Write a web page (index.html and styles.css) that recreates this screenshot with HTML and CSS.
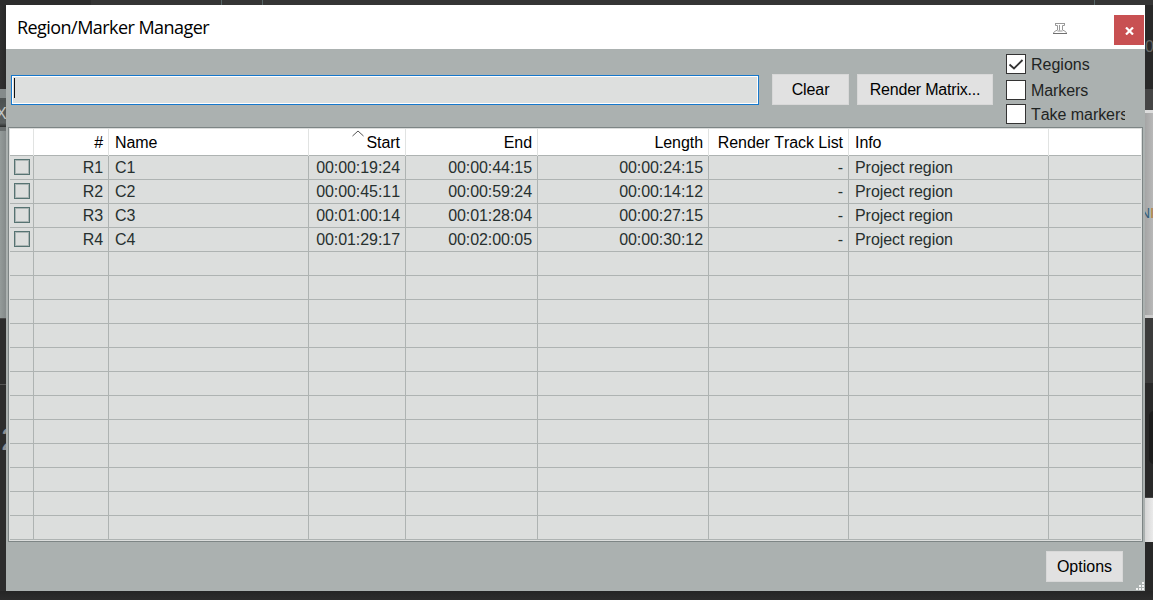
FILE: index.html
```html
<!DOCTYPE html>
<html lang="en">
<head>
<meta charset="utf-8">
<title>Region/Marker Manager</title>
<link rel="stylesheet" href="styles.css">
</head>
<body>
<div class="edge edge-top"><i class="notch"></i><i class="notch"></i><i class="notch notch-far"></i></div>
<div class="edge edge-left">
  <div class="l-dark"></div><div class="l-light"></div><div class="l-seam"></div>
  <div class="l-tab"><span>X</span></div><div class="l-lip"></div><div class="l-panel"></div>
  <div class="l-upper"></div><div class="l-lower"><span>2</span></div>
</div>
<main class="window">
  <header class="titlebar">
    <h1 class="title">Region/Marker Manager</h1>
    <svg class="pin" width="14" height="11" viewBox="0 0 14 11" fill="none" stroke="#999"><path d="M2 .5h10M2.500 1v1.500h2v4.500l-3 1.500-1 1.500M11.500 1v1.500h-2v4.500l3 1.500 1 1.500M6.500 2v5.500M4.500 8h5" /><path d="M0 10.500h14" stroke="#707070"/></svg>
    <button class="close" aria-label="Close"><svg width="9" height="8" viewBox="0 0 9 8"><path d="M1 .5l7 7M8 .5l-7 7" stroke="#fff" stroke-width="2.200"/></svg></button>
  </header>
  <section class="toolbar">
    <div class="search"><span class="caret"></span></div>
    <button class="btn clear">Clear</button>
    <button class="btn matrix">Render Matrix...</button>
    <div class="filters">
      <label class="filter"><span class="check"><svg width="18" height="18" viewBox="0 0 18 18"><path d="M2.500 9.500l4.500 4L15.500 5" fill="none" stroke="#333" stroke-width="1.800"/></svg></span><span>Regions</span></label>
      <label class="filter second"><span class="check"></span><span>Markers</span></label>
      <label class="filter third"><span class="check"></span><span class="clip">Take markers</span></label>
    </div>
  </section>
  <section class="list">
    <div class="row head"><span></span><span class="r">#</span><span>Name</span><span class="r sorted">Start<svg class="sort" width="12" height="7" viewBox="0 0 12 7"><path d="M.5 6l5.500-5 5.500 5" fill="none" stroke="#555"/></svg></span><span class="r">End</span><span class="r">Length</span><span class="r">Render Track List</span><span>Info</span><span></span></div>
    <div class="row"><span class="pick"><i></i></span><span class="r">R1</span><span>C1</span><span class="r">00:00:19:24</span><span class="r">00:00:44:15</span><span class="r">00:00:24:15</span><span class="r">-</span><span>Project region</span><span></span></div>
    <div class="row"><span class="pick"><i></i></span><span class="r">R2</span><span>C2</span><span class="r">00:00:45:11</span><span class="r">00:00:59:24</span><span class="r">00:00:14:12</span><span class="r">-</span><span>Project region</span><span></span></div>
    <div class="row"><span class="pick"><i></i></span><span class="r">R3</span><span>C3</span><span class="r">00:01:00:14</span><span class="r">00:01:28:04</span><span class="r">00:00:27:15</span><span class="r">-</span><span>Project region</span><span></span></div>
    <div class="row"><span class="pick"><i></i></span><span class="r">R4</span><span>C4</span><span class="r">00:01:29:17</span><span class="r">00:02:00:05</span><span class="r">00:00:30:12</span><span class="r">-</span><span>Project region</span><span></span></div>
    <div class="row"><span></span><span></span><span></span><span></span><span></span><span></span><span></span><span></span><span></span></div>
    <div class="row"><span></span><span></span><span></span><span></span><span></span><span></span><span></span><span></span><span></span></div>
    <div class="row"><span></span><span></span><span></span><span></span><span></span><span></span><span></span><span></span><span></span></div>
    <div class="row"><span></span><span></span><span></span><span></span><span></span><span></span><span></span><span></span><span></span></div>
    <div class="row"><span></span><span></span><span></span><span></span><span></span><span></span><span></span><span></span><span></span></div>
    <div class="row"><span></span><span></span><span></span><span></span><span></span><span></span><span></span><span></span><span></span></div>
    <div class="row"><span></span><span></span><span></span><span></span><span></span><span></span><span></span><span></span><span></span></div>
    <div class="row"><span></span><span></span><span></span><span></span><span></span><span></span><span></span><span></span><span></span></div>
    <div class="row"><span></span><span></span><span></span><span></span><span></span><span></span><span></span><span></span><span></span></div>
    <div class="row"><span></span><span></span><span></span><span></span><span></span><span></span><span></span><span></span><span></span></div>
    <div class="row"><span></span><span></span><span></span><span></span><span></span><span></span><span></span><span></span><span></span></div>
    <div class="row"><span></span><span></span><span></span><span></span><span></span><span></span><span></span><span></span><span></span></div>
  </section>
  <footer class="footer">
    <button class="btn options">Options</button>
    <svg class="grip" width="8" height="8" viewBox="0 0 8 8" fill="#f4f4f4"><path d="M6 0h2v2h-2zM3 3h2v2h-2zM6 3h2v2h-2zM0 6h2v2h-2zM3 6h2v2h-2zM6 6h2v2h-2z"/></svg>
  </footer>
</main>
<div class="edge edge-right">
  <div class="r-dark"><span>0</span></div><div class="r-mid"></div><div class="r-line"></div>
  <div class="r-panel"><span><b>N</b>I</span></div><div class="r-rim"></div><div class="r-grey"></div>
  <div class="r-well"><i></i></div><div class="r-white"></div><div class="r-base"></div>
</div>
<div class="edge edge-bottom"></div>
</body>
</html>
```
FILE: styles.css
```css
* { box-sizing: border-box; }
body {
  margin: 0;
  width: 1153px;
  height: 600px;
  overflow: hidden;
  display: grid;
  grid-template: 5px 586px 9px / 6px 1139px 8px;
  background: #2c2c2c;
  font: 16px/18px "Liberation Sans", Arial, sans-serif;
  font-kerning: none;
  color: #000;
}
.edge { overflow: hidden; }
.edge-top, .edge-bottom { grid-column: 1 / -1; }
.edge-top { display: flex; background: linear-gradient(90deg, #2d2d2d 91px, #353535 91px); padding-left: 221px; }
.notch { width: 1px; height: 5px; margin-right: 40px; background: #566566; }
.notch-far { margin-left: 791px; }
.edge-bottom { background: linear-gradient(#252525, #2d2d2d); }
.edge-left, .edge-right { display: flex; flex-direction: column; }
.edge-left > div, .edge-right > div { flex: none; }
.l-dark { height: 84px; background: linear-gradient(90deg, #303030, #292929); }
.l-light { height: 9px; background: #858b8b; }
.l-seam { height: 2px; background: #505555; }
.l-tab { height: 27px; background: linear-gradient(#4b5050, #5c6161 85%, #292b2b); color: #c4c8c8; overflow: hidden; }
.l-tab span { display: block; margin: 5px 0 0 -4px; }
.l-lip { height: 4px; background: #6b7070; }
.l-panel { height: 187px; background: linear-gradient(90deg, #949b9a, #848a8a); }
.l-upper { height: 67px; background: #2d2d2d; border-top: 1px solid #484848; border-bottom: 1px solid #555; }
.l-lower { height: 206px; background: #2d2d2d; color: #8b9096; overflow: hidden; }
.l-lower span { display: block; margin: 36px 0 0 1px; font-size: 32px; line-height: 36px; }
.r-dark { height: 84px; background: #292929; color: #666; overflow: hidden; }
.r-dark span { display: block; margin: 33px 0 0 0; }
.r-mid { height: 21px; background: #454545; }
.r-line { height: 3px; background: #dcdcdc; }
.r-panel { height: 202px; background: linear-gradient(90deg, #a5a5a5, #b8b8b8); color: #b07f3c; overflow: hidden; }
.r-panel span { display: block; margin: 91px 0 0 -5px; font-size: 14px; }
.r-panel b { color: #33607c; font-weight: 400; }
.r-rim { height: 3px; background: #cbcbcb; }
.r-grey { height: 65px; background: #3b3b3b; }
.r-well { height: 115px; padding: 28px 0 0 4px; background: #292929; border-bottom: 1px solid #454545; }
.r-well i { display: block; width: 12px; height: 53px; border-radius: 5px; background: #1d1d1d; }
.r-white { height: 44px; background: linear-gradient(90deg, #d5d5d5, #eaeaea); }
.r-base { height: 49px; background: #282828; }

.window { display: flex; flex-direction: column; background: #abb1b0; overflow: hidden; }
.titlebar { display: flex; flex: none; height: 44px; background: #fff; }
.title {
  margin: 9px 0 0 11px;
  width: 1036px;
  font: 400 18px/26px "Open Sans", "Noto Sans", sans-serif;
  letter-spacing: -.55px;
}
.pin { margin-top: 18px; }
.close { margin: 10px 0 0 47px; width: 30px; height: 30px; padding: 1px 0 0 1px; border: 0; background: #c85052; }
.close svg { display: block; margin: auto; }

.toolbar { display: flex; flex: none; height: 78px; padding-left: 5px; }
.search { width: 748px; height: 30px; margin-top: 26px; padding: 2px; border: 1px solid #1678cc; background: #dddfde; box-shadow: inset 0 0 0 1px #fff; }
.caret { display: block; width: 1px; height: 20px; background: #111; }
.btn { flex: none; border: 1px solid #d8d8d8; padding: 0; background: #e1e1e1; color: #000; font: inherit; font-kerning: none; }
.clear { width: 77px; height: 31px; margin: 25px 0 0 13px; letter-spacing: -.1px; }
.matrix { width: 136px; height: 31px; margin: 25px 0 0 8px; letter-spacing: -.2px; }
.filters { display: flex; flex-direction: column; margin: 5px 0 0 13px; color: #1f2423; }
.filter { display: flex; height: 20px; gap: 5px; line-height: 21px; white-space: nowrap; }
.second { margin-top: 6px; letter-spacing: -.1px; }
.third { margin-top: 4px; letter-spacing: -.05px; }
.check { width: 20px; height: 20px; border: 1px solid #333; background: #fff; }
.check svg { display: block; }
.clip { width: 94px; overflow: hidden; }

.list { flex: none; width: 1135px; height: 415px; margin-left: 2px; padding: 1px; border: 1px solid #7d8585; background: #dcdedd; }
.row {
  display: grid;
  grid-template-columns: 24px 75px 200px 97px 132px 171px 140px 200px 92px;
  height: 24px;
  border-bottom: 1px solid #aeb3b2;
  color: #27302f;
  line-height: 23px;
  letter-spacing: -.06px;
  white-space: nowrap;
}
.row span { padding-left: 6px; border-right: 1px solid #aeb3b2; }
.row span:last-child { border-right: 0; }
.row .r { padding: 0 5px 0 0; text-align: right; }
.head { height: 27px; background: #fff; color: #000; line-height: 27px; }
.head span { border-right-color: #e1e3e2; }
.sorted { position: relative; }
.sort { position: absolute; left: 43px; top: 1px; }
.row .pick { padding: 3px 0 0 4px; }
.pick i { display: block; width: 16px; height: 16px; border: 1px solid #567372; box-shadow: inset 0 0 0 1px #abb5b4; }

.footer { display: flex; flex: 1; }
.options { width: 77px; height: 31px; margin: 9px 0 0 1040px; }
.grip { margin: 40px 0 0 13px; }
```
